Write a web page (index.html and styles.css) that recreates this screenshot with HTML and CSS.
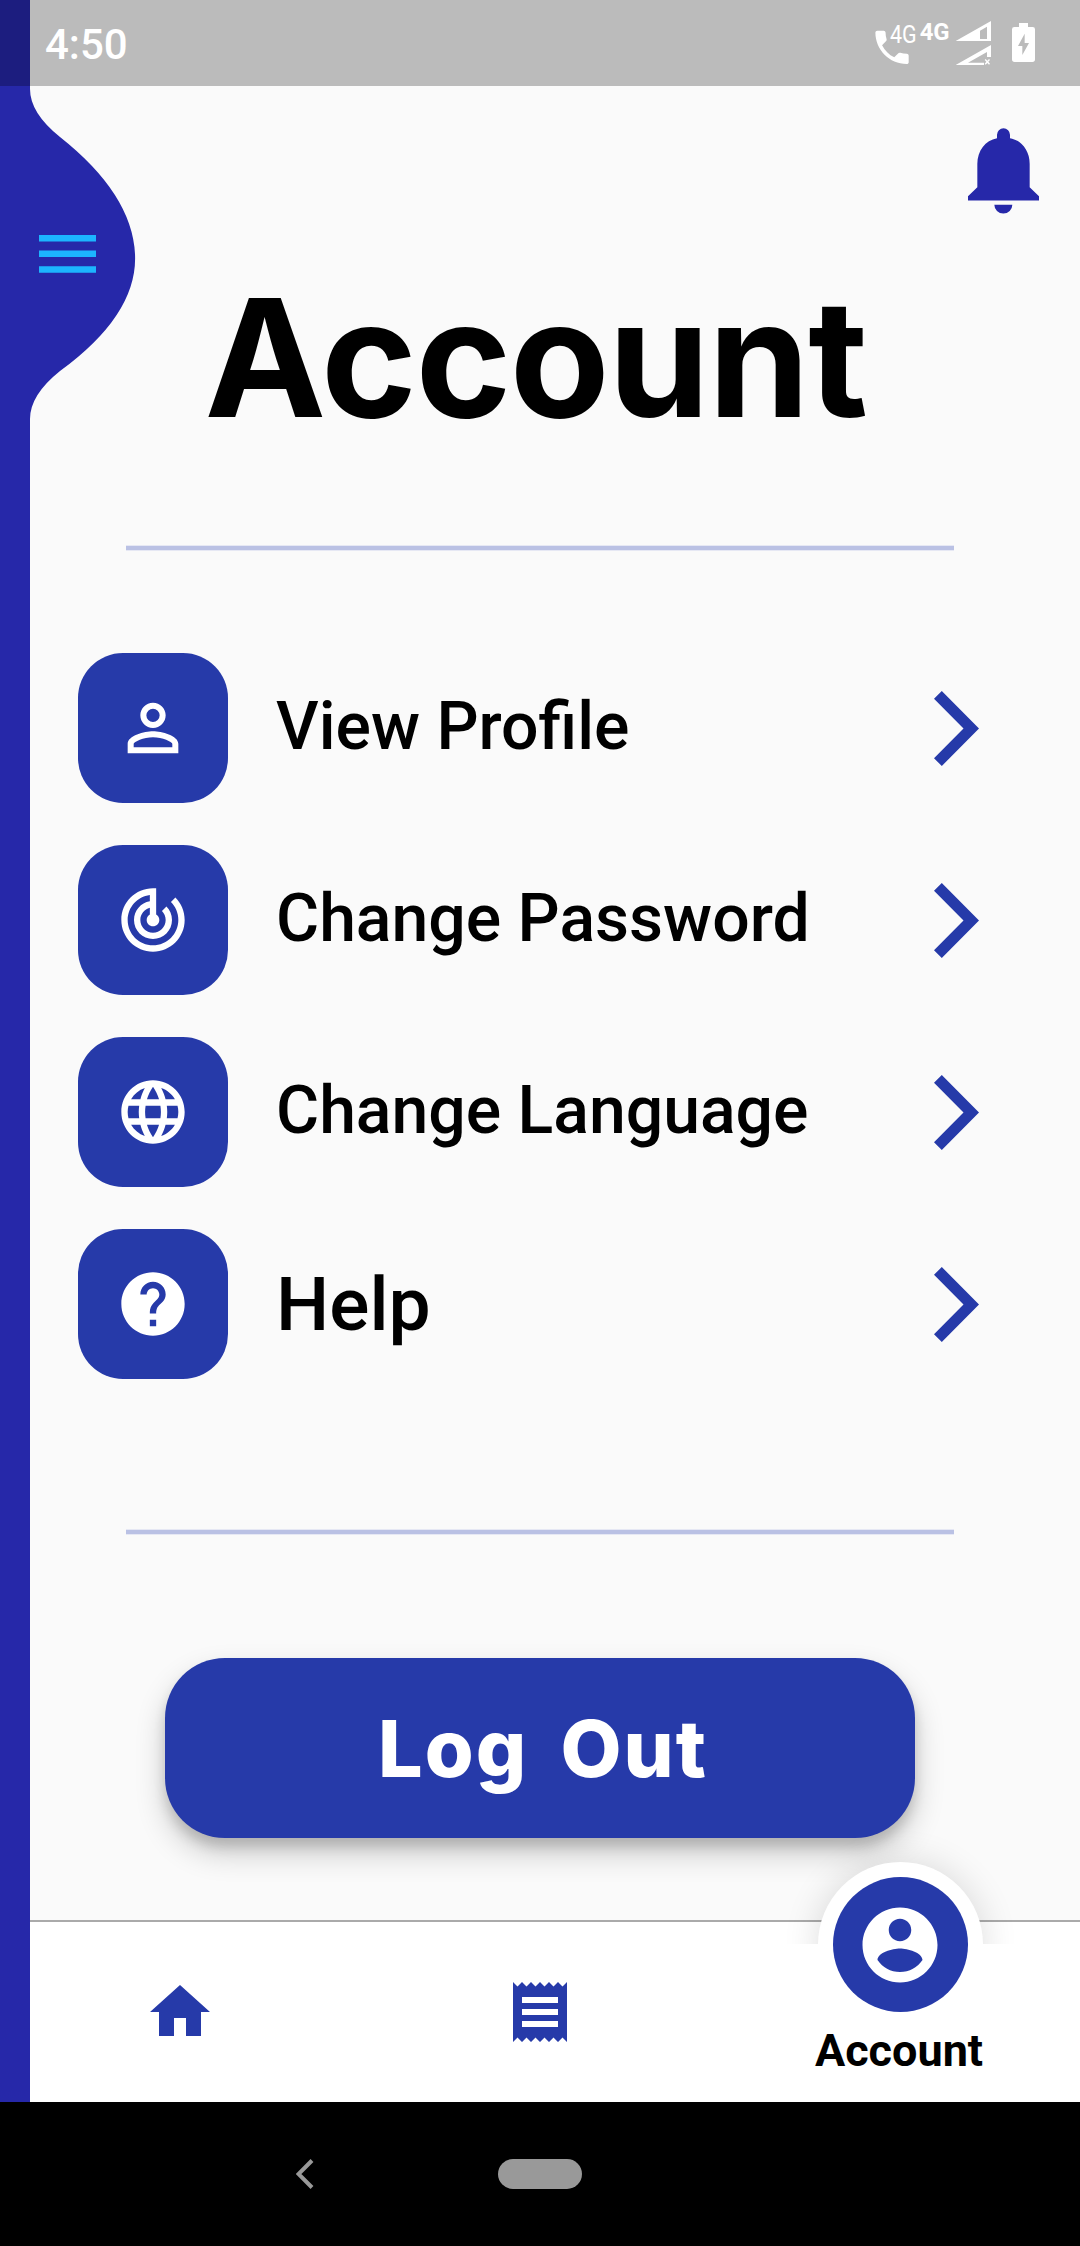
FILE: index.html
```html
<!DOCTYPE html>
<html lang="en">
<head>
<meta charset="utf-8">
<title>Account</title>
<link rel="stylesheet" href="styles.css">
</head>
<body>
<div class="phone">
  <header class="status">
    <span class="time">4:50</span>
    <svg class="status-icons" viewBox="0 0 720 258" fill="#fff">
      <path transform="translate(89.500 75.500) scale(5.55)" d="M6.62 10.79c1.44 2.83 3.76 5.14 6.59 6.59l2.2-2.2c.27-.27.67-.36 1.02-.24 1.12.37 2.33.57 3.57.57.55 0 1 .45 1 1V20c0 .55-.45 1-1 1-9.39 0-17-7.61-17-17 0-.55.45-1 1-1h3.500c.55 0 1 .45 1 1 0 1.250.2 2.450.57 3.570.11.35.03.74-.25 1.020l-2.200 2.200z"/>
      <text class="net-light" x="150" y="129" textLength="80" lengthAdjust="spacingAndGlyphs">4G</text>
      <text class="net-bold" x="239" y="119" textLength="90" lengthAdjust="spacingAndGlyphs">4G</text>
      <path fill-rule="evenodd" d="M347 123L453 63V123ZM420 92V117H441V80Z"/>
      <path d="M347 195L453 135V171H441V156L384 188H432V195ZM434 180l3-3 5 5 5-5 3 3-5 5 5 6-3 3-5-5-5 5-3-3 5-6z"/>
      <path fill-rule="evenodd" d="M537 69H564V81H578Q585 81 585 88V178Q585 186 577 186H524Q516 186 516 178V88Q516 81 523 81H537ZM554 101L534 138H547V165L567 129H554Z"/>
    </svg>
  </header>

  <aside class="sidebar">
    <svg class="menu-tab" viewBox="0 0 35 110">
      <path fill="#2628a9" d="M-1 0H0Q0 8 10 16Q34 35 35 55Q36 75 10 94Q0 102 0 110H-1Z"/>
    </svg>
    <svg class="menu-icon" viewBox="0 0 57 38" fill="#1cb5ff"><path d="M0 0h57v6.500H0zM0 15.600h57v6.500H0zM0 31.300h57v6.500H0z"/></svg>
  </aside>

  <main class="content">
    <div class="top">
      <svg class="bell" viewBox="384 386 213 257" fill="#2628a9">
        <path d="M384 603V590L412 563V493C412 454 436 422 471 416V406A19.500 19.500 0 0 1 510 406V416C545 422 569 454 569 493V563L597 590V603ZM463 616H517A27 26 0 0 1 463 616Z"/>
      </svg>
    </div>
    <h1 class="title">Account</h1>
    <div class="divider"></div>
    <nav class="menu">
      <a class="row">
        <span class="tile"><svg viewBox="0 0 24 24"><path d="M12 5.900a2.100 2.100 0 1 1 0 4.200 2.100 2.100 0 0 1 0-4.200m0 9c2.970 0 6.100 1.460 6.100 2.100v1.100H5.900V17c0-.64 3.130-2.100 6.100-2.100M12 4C9.790 4 8 5.790 8 8s1.790 4 4 4 4-1.790 4-4-1.790-4-4-4zm0 9c-2.670 0-8 1.340-8 4v3h16v-3c0-2.660-5.330-4-8-4z"/></svg></span>
        <span class="label">View Profile</span>
        <svg class="chevron" viewBox="0 0 45 75"><path d="M7.800 0L45 37.500 7.800 75 0 67.200 29.500 37.500 0 7.800z"/></svg>
      </a>
      <a class="row">
        <span class="tile"><svg viewBox="0 0 24 24"><path d="M19.070 4.930l-1.410 1.410C19.100 7.790 20 9.790 20 12c0 4.420-3.580 8-8 8s-8-3.580-8-8c0-4.080 3.050-7.440 7-7.930v2.020C8.160 6.570 6 9.030 6 12c0 3.310 2.690 6 6 6s6-2.690 6-6c0-1.660-.67-3.160-1.760-4.240l-1.410 1.410C15.550 9.900 16 10.900 16 12c0 2.210-1.790 4-4 4s-4-1.790-4-4c0-1.860 1.280-3.410 3-3.860v2.140c-.6.35-1 .98-1 1.720 0 1.100.9 2 2 2s2-.9 2-2c0-.74-.4-1.380-1-1.720V2h-1C6.480 2 2 6.480 2 12s4.480 10 10 10 10-4.480 10-10c0-2.760-1.120-5.260-2.930-7.070z"/></svg></span>
        <span class="label">Change Password</span>
        <svg class="chevron" viewBox="0 0 45 75"><path d="M7.800 0L45 37.500 7.800 75 0 67.200 29.500 37.500 0 7.800z"/></svg>
      </a>
      <a class="row">
        <span class="tile"><svg viewBox="0 0 24 24"><path d="M11.990 2C6.470 2 2 6.480 2 12s4.470 10 9.990 10C17.520 22 22 17.520 22 12S17.520 2 11.990 2zm6.930 6h-2.950c-.32-1.250-.78-2.450-1.380-3.560 1.840.63 3.370 1.910 4.330 3.560zM12 4.040c.83 1.200 1.480 2.530 1.910 3.960h-3.820c.43-1.430 1.080-2.760 1.910-3.960zM4.260 14C4.100 13.360 4 12.690 4 12s.1-1.360.26-2h3.380c-.08.66-.14 1.320-.14 2s.06 1.340.14 2H4.260zm.82 2h2.950c.32 1.250.78 2.450 1.380 3.560-1.840-.63-3.370-1.900-4.330-3.560zm2.950-8H5.080c.96-1.660 2.490-2.930 4.330-3.560C8.810 5.550 8.350 6.750 8.030 8zM12 19.960c-.83-1.200-1.480-2.530-1.910-3.960h3.820c-.43 1.430-1.080 2.760-1.910 3.960zM14.340 14H9.660c-.09-.66-.16-1.320-.16-2s.07-1.350.16-2h4.680c.09.65.16 1.320.16 2s-.07 1.340-.16 2zm.25 5.560c.6-1.110 1.060-2.310 1.380-3.560h2.950c-.96 1.650-2.490 2.930-4.330 3.560zM16.360 14c.08-.66.14-1.320.14-2s-.06-1.340-.14-2h3.380c.16.64.26 1.310.26 2s-.1 1.360-.26 2h-3.380z"/></svg></span>
        <span class="label">Change Language</span>
        <svg class="chevron" viewBox="0 0 45 75"><path d="M7.800 0L45 37.500 7.800 75 0 67.200 29.500 37.500 0 7.800z"/></svg>
      </a>
      <a class="row">
        <span class="tile"><svg viewBox="0 0 24 24"><path d="M12 2C6.480 2 2 6.480 2 12s4.480 10 10 10 10-4.480 10-10S17.520 2 12 2zm1 17h-2v-2h2v2zm2.070-7.750l-.9.920C13.450 12.900 13 13.500 13 15h-2v-.5c0-1.100.45-2.100 1.170-2.830l1.240-1.260c.37-.36.59-.86.59-1.410 0-1.100-.9-2-2-2s-2 .9-2 2H8c0-2.210 1.790-4 4-4s4 1.790 4 4c0 .88-.36 1.680-.93 2.250z"/></svg></span>
        <span class="label label-large">Help</span>
        <svg class="chevron" viewBox="0 0 45 75"><path d="M7.800 0L45 37.500 7.800 75 0 67.200 29.500 37.500 0 7.800z"/></svg>
      </a>
    </nav>
    <div class="divider"></div>
    <button class="logout">Log Out</button>
  </main>

  <nav class="tabs">
    <a class="tab"><svg class="tab-icon" viewBox="0 0 24 24"><path d="M10 20v-6h4v6h5v-8h3L12 3 2 12h3v8z"/></svg></a>
    <a class="tab"><svg class="tab-icon" viewBox="0 0 24 24"><path d="M18 17H6v-2h12v2zm0-4H6v-2h12v2zm0-4H6V7h12v2zM3 22l1.500-1.500L6 22l1.500-1.500L9 22l1.500-1.500L12 22l1.500-1.500L15 22l1.500-1.500L18 22l1.500-1.500L21 22V2l-1.500 1.500L18 2l-1.500 1.500L15 2l-1.500 1.500L12 2l-1.500 1.500L9 2 7.500 3.500 6 2 4.500 3.500 3 2v20z"/></svg></a>
    <a class="tab tab-active">
      <span class="halo-clip"><span class="halo"></span></span>
      <span class="fab"><svg viewBox="0 0 24 24"><path d="M12 2C6.480 2 2 6.480 2 12s4.480 10 10 10 10-4.480 10-10S17.520 2 12 2zm0 3c1.660 0 3 1.340 3 3s-1.340 3-3 3-3-1.340-3-3 1.340-3 3-3zm0 14.200c-2.500 0-4.710-1.280-6-3.220.03-1.990 4-3.080 6-3.080 1.990 0 5.970 1.090 6 3.080-1.290 1.940-3.500 3.220-6 3.220z"/></svg></span>
      <span class="tab-label">Account</span>
    </a>
  </nav>

  <footer class="system">
    <svg class="back" viewBox="0 0 18 30"><path d="M16 1.500L2.500 15 16 28.500" fill="none" stroke="#999" stroke-width="4"/></svg>
    <span class="pill"></span>
  </footer>
</div>
</body>
</html>
```

FILE: styles.css
```css
* { box-sizing: border-box; }
body { margin: 0; background: #fafafa; }
svg { display: block; flex: none; }

.phone {
  position: relative;
  width: 1080px;
  height: 2246px;
  display: flex;
  flex-direction: column;
  overflow: hidden;
  background: #fafafa;
  font-family: Roboto, sans-serif;
  color: #000;
}

/* Status bar */
.status {
  flex: none;
  height: 86px;
  padding-left: 45px;
  display: flex;
  align-items: center;
  justify-content: space-between;
  background: linear-gradient(90deg, #1c1d7f 30px, #bbb 30px);
  color: #fff;
}
.time { font-size: 42px; font-weight: 500; line-height: 50px; padding-top: 3px; }
.status-icons { width: 240px; height: 86px; }
.net-light { font: 400 79px Roboto, sans-serif; }
.net-bold { font: 700 73px Roboto, sans-serif; }

/* Collapsed drawer lying over the page's left edge */
.sidebar {
  position: absolute;
  z-index: 2;
  left: 0;
  top: 86px;
  width: 30px;
  height: 2016px;
  background: #2628a9;
}
.menu-tab { position: absolute; left: 30px; top: 2.5px; width: 105px; height: 330px; overflow: visible; }
.menu-icon { position: absolute; left: 39px; top: 148.7px; width: 57px; height: 38px; }

.content {
  flex: none;
  height: 1834px;
  display: flex;
  flex-direction: column;
  align-items: center;
}
.top { align-self: stretch; display: flex; justify-content: flex-end; padding: 42px 41px 0 0; }
.bell { width: 71px; height: 86px; }

.title {
  margin: 44px 0 0;
  padding-right: 9px;
  height: 200px;
  font: 700 163px/200px Inter, "Liberation Sans", sans-serif;
  letter-spacing: -1.5px;
}
.divider {
  flex: none;
  width: 828px;
  height: 4px;
  margin-top: 88px;
  background: #bac1e4;
  box-shadow: 0 1px #e6e8f4, 0 -1px #e6e8f4;
}

.menu {
  align-self: stretch;
  margin-top: 103px;
  padding: 0 101px 0 78px;
  display: flex;
  flex-direction: column;
  gap: 42px;
}
.row { display: flex; align-items: center; height: 150px; }
.tile {
  width: 150px;
  height: 150px;
  border-radius: 45px;
  display: flex;
  align-items: center;
  justify-content: center;
  background: #263aa9;
}
.tile svg { width: 76px; height: 76px; fill: #fff; }
.label { flex: 1; margin-left: 48px; font-size: 66.1px; font-weight: 500; line-height: 80px; padding-bottom: 3px; }
.label-large { font-size: 75px; line-height: 90px; padding-bottom: 0; }
.chevron { width: 45px; height: 75px; fill: #263aa9; }

.menu + .divider { margin-top: 151px; }

.logout {
  flex: none;
  width: 750px;
  height: 180px;
  margin-top: 124px;
  padding: 0 0 0 6px;
  border: 0;
  border-radius: 60px;
  background: #263aa9;
  box-shadow: 0 15px 30px rgba(0, 0, 0, .2), 0 9px 12px rgba(0, 0, 0, .14);
  color: #fff;
  font: 800 79px/180px Inter, "Liberation Sans", sans-serif;
  letter-spacing: 2px;
  word-spacing: 13px;
}

/* Bottom tabs */
.tabs {
  flex: none;
  height: 182px;
  display: flex;
  background: #fff;
  border-top: 2px solid #aaa;
}
.tab { flex: 1; display: flex; align-items: center; justify-content: center; }
.tab-icon { width: 72px; height: 72px; fill: #263aa9; }
.tab-active { position: relative; align-items: flex-end; }
.halo-clip {
  position: absolute;
  left: 0;
  top: -120px;
  width: 360px;
  height: 142px;
  overflow: hidden;
}
.halo {
  position: absolute;
  left: 97.500px;
  top: 60px;
  width: 165px;
  height: 165px;
  border-radius: 50%;
  background: #fff;
  box-shadow: 0 0 36px rgba(0, 0, 0, .14);
}
.fab {
  position: absolute;
  left: 112.500px;
  top: -45px;
  width: 135px;
  height: 135px;
  border-radius: 50%;
  background: #263aa9;
  display: flex;
  align-items: center;
  justify-content: center;
}
.fab svg { width: 90px; height: 90px; fill: #fff; }
.tab-label { font-size: 45px; font-weight: 700; line-height: 54px; padding: 0 2px 24px 0; }

/* System navigation */
.system {
  flex: none;
  height: 144px;
  padding-left: 296px;
  display: flex;
  align-items: center;
  gap: 184px;
  background: #000;
}
.back { width: 18px; height: 30px; }
.pill { width: 84px; height: 30px; border-radius: 15px; background: #999; }
```
